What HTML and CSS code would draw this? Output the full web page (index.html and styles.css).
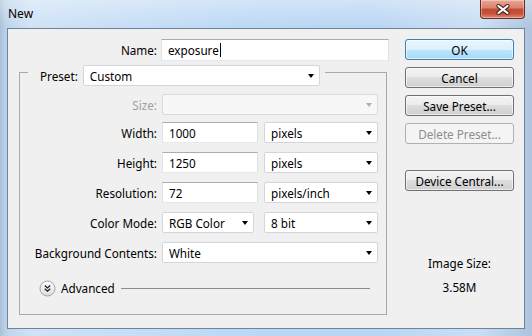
FILE: index.html
```html
<!DOCTYPE html>
<html>
<head>
<meta charset="utf-8">
<title>New</title>
<link rel="stylesheet" href="styles.css">
</head>
<body>

<div class="titlebar">
  <span class="title">New</span>
  <div class="close">
    <svg width="14" height="11" viewBox="0 0 14 11">
      <path d="M2.5 2 L11.5 9 M11.5 2 L2.5 9" stroke="#4a2a26" stroke-width="4.2" stroke-linecap="round"/>
      <path d="M2.5 2 L11.5 9 M11.5 2 L2.5 9" stroke="#fff" stroke-width="2.2" stroke-linecap="round"/>
    </svg>
  </div>
</div>

<div class="client">
  <div class="form">
    <div class="row name-row">
      <span class="label">Name:</span>
      <div class="field text name">exposure<span class="caret"></span></div>
    </div>

    <div class="group">
      <div class="legend">
        <span class="label">Preset:</span>
        <div class="field combo preset">Custom<i class="arrow"></i></div>
      </div>

      <div class="rows">
        <div class="row size-row">
          <span class="label off">Size:</span>
          <div class="field combo wide off"><i class="arrow"></i></div>
        </div>
        <div class="row">
          <span class="label">Width:</span>
          <div class="field text num">1000</div>
          <div class="field combo unit">pixels<i class="arrow"></i></div>
        </div>
        <div class="row">
          <span class="label">Height:</span>
          <div class="field text num">1250</div>
          <div class="field combo unit">pixels<i class="arrow"></i></div>
        </div>
        <div class="row">
          <span class="label">Resolution:</span>
          <div class="field text num">72</div>
          <div class="field combo unit">pixels/inch<i class="arrow"></i></div>
        </div>
        <div class="row">
          <span class="label">Color Mode:</span>
          <div class="field combo mode">RGB Color<i class="arrow"></i></div>
          <div class="field combo unit bits">8 bit<i class="arrow"></i></div>
        </div>
        <div class="row">
          <span class="label">Background Contents:</span>
          <div class="field combo wide">White<i class="arrow"></i></div>
        </div>
      </div>

      <div class="advanced">
        <svg class="adv-icon" width="17" height="17" viewBox="0 0 17 17">
          <defs>
            <linearGradient id="advfill" x1="0" y1="0" x2="0" y2="1">
              <stop offset="0" stop-color="#ffffff"/>
              <stop offset="1" stop-color="#dcdcdc"/>
            </linearGradient>
          </defs>
          <circle cx="8.5" cy="8.5" r="7.5" fill="url(#advfill)" stroke="#a3a3a3"/>
          <path d="M5.8 5.6 L8.5 8 L11.2 5.6 M5.8 8.8 L8.5 11.2 L11.2 8.8" fill="none" stroke="#1e1e1e" stroke-width="1.3"/>
        </svg>
        <span class="adv-text">Advanced</span>
        <span class="adv-line"></span>
      </div>
    </div>
  </div>

  <div class="side">
    <div class="btn default">OK</div>
    <div class="btn">Cancel</div>
    <div class="btn">Save Preset...</div>
    <div class="btn off">Delete Preset...</div>
    <div class="btn device">Device Central...</div>
    <div class="info">
      <div>Image Size:</div>
      <div>3.58M</div>
    </div>
  </div>
</div>

</body>
</html>
```

FILE: styles.css
```css
* {
    box-sizing: border-box;
}

html, body {
    margin: 0;
}

body {
    width: 532px;
    height: 336px;
    overflow: hidden;
    font-family: "Noto Sans", sans-serif;
    font-size: 11.7px;
    color: #000;
    background:
        linear-gradient(to bottom, rgba(255,255,255,0.35), rgba(255,255,255,0) 28px),
        linear-gradient(to right, #a9c0d8 0, #bdd3ea 6px, #cfe2f6 30px, #bcd8f5 45%, #b9d5f3 70%, #c9def4 90%, #aec4dc 100%);
}

/* title bar */

.titlebar {
    height: 28px;
    display: flex;
    align-items: flex-start;
}

.title {
    padding: 5px 0 0 8px;
    font-size: 12px;
    color: #000;
}

.close {
    margin-left: auto;
    margin-right: 7px;
    width: 45px;
    height: 19px;
    display: flex;
    align-items: center;
    justify-content: center;
    border: 1px solid #6a2b22;
    border-top: none;
    border-radius: 0 0 4px 4px;
    background: linear-gradient(to bottom, #e9a895 0, #d9806b 45%, #c24a33 50%, #c6513a 75%, #dc8b74 100%);
    box-shadow: inset 0 0 0 1px rgba(255,255,255,0.35);
}

/* client area */

.client {
    height: 301px;
    margin: 0 7px;
    border: 1px solid #6f8396;
    background: #f0f0f0;
    display: flex;
    padding: 10px 10px 0 11px;
}

.form {
    width: 370px;
    flex: none;
}

.row {
    display: flex;
    align-items: center;
    height: 21px;
}

.label {
    flex: none;
    text-align: right;
    white-space: nowrap;
}

.label.off {
    color: #a0a0a0;
}

.field {
    height: 21px;
    display: flex;
    align-items: center;
    padding-left: 6px;
    background: #fff;
    white-space: nowrap;
    position: relative;
}

.field.text {
    border: 1px solid;
    border-color: #abadb3 #dbdfe6 #e3e9ef #e2e3ea;
}

.field.combo {
    border: 1px solid #d2d6db;
    border-radius: 2px;
}

.field.combo.off {
    background: #f7f7f7;
    border-color: #dadada;
}

.arrow {
    position: absolute;
    right: 5px;
    top: 8px;
    width: 0;
    height: 0;
    border-left: 3.5px solid transparent;
    border-right: 3.5px solid transparent;
    border-top: 4px solid #000;
}

.off .arrow {
    border-top-color: #b0b0b0;
}

.name-row .label {
    width: 138px;
    margin-right: 4px;
}

.name {
    width: 228px;
    height: 22px;
}

.caret {
    display: inline-block;
    width: 1px;
    height: 14px;
    margin-left: 1px;
    background: #000;
}

/* preset group */

.group {
    margin-top: 12px;
    width: 368px;
    height: 243px;
    border: 1px solid #a8a8a8;
}

.legend {
    display: flex;
    align-items: center;
    width: fit-content;
    margin: -8px 0 0 8px;
    padding: 0 5px 0 12px;
    background: #f0f0f0;
}

.legend .label {
    margin-right: 5px;
}

.preset {
    width: 237px;
}

.rows {
    margin-top: 8px;
    display: flex;
    flex-direction: column;
    gap: 9px;
}

.rows .label {
    width: 137px;
    margin-right: 5px;
}

.size-row {
    margin-bottom: -2px;
}

.wide {
    width: 216px;
}

.num {
    width: 96px;
}

.unit {
    width: 114px;
    margin-left: 6px;
}

.mode {
    width: 92px;
}

.bits {
    margin-left: 10px;
}

.advanced {
    margin-top: 17px;
    height: 16px;
    display: flex;
    align-items: center;
    padding-left: 19px;
}

.adv-icon {
    flex: none;
}

.adv-text {
    margin-left: 5px;
}

.adv-line {
    flex: 1;
    height: 1px;
    margin: 0 16px 0 6px;
    background: #8c8c8c;
}

/* buttons */

.side {
    margin-left: auto;
    width: 109px;
}

.btn {
    height: 21px;
    display: flex;
    align-items: center;
    justify-content: center;
    border: 1px solid #707070;
    border-radius: 3px;
    background: linear-gradient(to bottom, #f3f3f3 0, #ebebeb 50%, #dddddd 50%, #cfcfcf 100%);
    box-shadow: inset 0 0 0 1px rgba(255,255,255,0.6);
    color: #000;
}

.btn + .btn {
    margin-top: 7px;
}

.btn.default {
    border-color: #3c7fb1;
    background: linear-gradient(to bottom, #eaf6fd 0, #d9f0fc 50%, #bee6fd 50%, #a7d9f5 100%);
}

.btn.off {
    border-color: #adb2b5;
    background: #f4f4f4;
    box-shadow: none;
    color: #8d8d8d;
}

.btn.device {
    margin-top: 26px;
}

.info {
    margin-top: 60px;
    text-align: center;
    line-height: 24px;
    color: #000;
}
```
